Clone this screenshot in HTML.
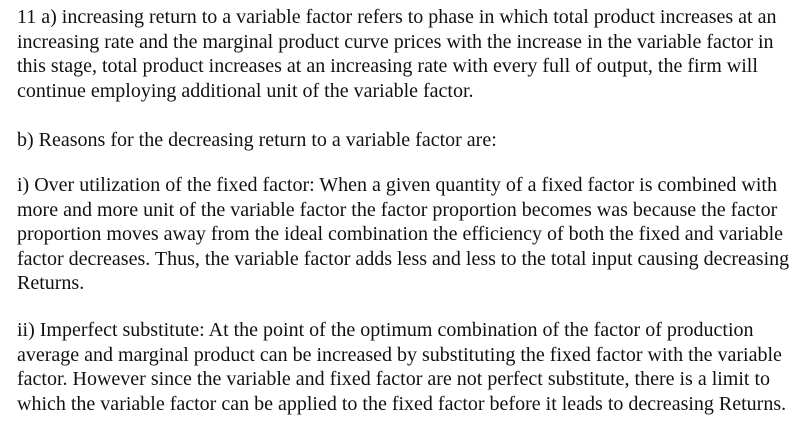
<!DOCTYPE html>
<html><head><meta charset="utf-8"><style>
html,body{margin:0;padding:0;background:#fff;width:811px;height:444px;overflow:hidden}
.p{position:absolute;left:17px;font-family:"Liberation Serif","Times New Roman",serif;font-size:20px;line-height:24.5px;color:#111;white-space:nowrap}
</style></head><body>
<div class="p" style="top:5px">11 a) increasing return to a variable factor refers to phase in which total product increases at an<br>increasing rate and the marginal product curve prices with the increase in the variable factor in<br>this stage, total product increases at an increasing rate with every full of output, the firm will<br>continue employing additional unit of the variable factor.</div>
<div class="p" style="top:128px">b) Reasons for the decreasing return to a variable factor are:</div>
<div class="p" style="top:173px">i) Over utilization of the fixed factor: When a given quantity of a fixed factor is combined with<br>more and more unit of the variable factor the factor proportion becomes was because the factor<br>proportion moves away from the ideal combination the efficiency of both the fixed and variable<br>factor decreases. Thus, the variable factor adds less and less to the total input causing decreasing<br>Returns.</div>
<div class="p" style="top:318px">ii) Imperfect substitute: At the point of the optimum combination of the factor of production<br>average and marginal product can be increased by substituting the fixed factor with the variable<br>factor. However since the variable and fixed factor are not perfect substitute, there is a limit to<br>which the variable factor can be applied to the fixed factor before it leads to decreasing Returns.</div>
</body></html>
